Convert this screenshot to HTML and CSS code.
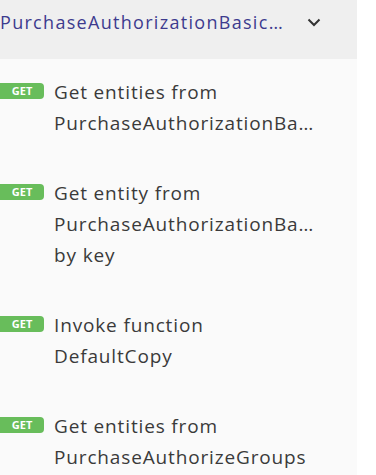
FILE: index.html
```html
<!DOCTYPE html>
<html lang="en">
<head>
    <meta charset="UTF-8">
    <meta name="viewport" content="width=device-width, initial-scale=1.0">
    <title>API Reference</title>
    <link rel="stylesheet" href="styles.css">
</head>
<body>
    <div class="sidebar">
        <div class="group-header">
            <span class="group-title">PurchaseAuthorizationBasicData</span>
            <svg class="chevron" width="14" height="9" viewBox="0 0 14 9">
                <path d="M1.5 1.5 L7 7 L12.5 1.5" fill="none" stroke="#333" stroke-width="2"/>
            </svg>
        </div>

        <ul class="endpoint-list">
            <li class="endpoint">
                <span class="method">GET</span>
                <div class="endpoint-text">
                    <span>Get entities from</span>
                    <span class="name">PurchaseAuthorizationBasicData</span>
                </div>
            </li>
            <li class="endpoint">
                <span class="method">GET</span>
                <div class="endpoint-text">
                    <span>Get entity from</span>
                    <span class="name">PurchaseAuthorizationBasicData</span>
                    <span>by key</span>
                </div>
            </li>
            <li class="endpoint">
                <span class="method">GET</span>
                <div class="endpoint-text">
                    <span>Invoke function</span>
                    <span class="name">DefaultCopy</span>
                </div>
            </li>
            <li class="endpoint">
                <span class="method">GET</span>
                <div class="endpoint-text">
                    <span>Get entities from</span>
                    <span class="name">PurchaseAuthorizeGroups</span>
                </div>
            </li>
        </ul>
    </div>
</body>
</html>
```

FILE: styles.css
```css
* {
    margin: 0;
    padding: 0;
    box-sizing: border-box;
}

body {
    font-family: "Open Sans", "DejaVu Sans", sans-serif;
    background: #fff;
    color: #3a3a3a;
    overflow: hidden;
}

.sidebar {
    width: 357px;
    min-height: 100vh;
    background: #fafafa;
}

.group-header {
    height: 59px;
    padding-top: 10px;
    background: #efefef;
    display: flex;
    align-items: flex-start;
}

.group-title {
    flex: none;
    width: 290px;
    font-size: 18px;
    line-height: 24px;
    letter-spacing: 1.3px;
    color: #3d3b8e;
    white-space: nowrap;
    overflow: hidden;
    text-overflow: ellipsis;
}

.chevron {
    margin-left: 17px;
    margin-top: 8px;
}

.endpoint-list {
    list-style: none;
    padding-top: 18px;
}

.endpoint {
    display: flex;
    align-items: flex-start;
    gap: 10px;
    padding-right: 37px;
    margin-bottom: 39px;
}

.method {
    flex: none;
    width: 44px;
    height: 16px;
    margin-top: 6px;
    background: #68bd5b;
    color: #fff;
    border-radius: 0 4px 4px 0;
    font-size: 11px;
    font-weight: 700;
    line-height: 16px;
    text-align: center;
}

.endpoint-text {
    flex: 1;
    min-width: 0;
    font-size: 19px;
    line-height: 31px;
    letter-spacing: 0.85px;
}

.endpoint-text span {
    display: block;
    white-space: nowrap;
    overflow: hidden;
    text-overflow: ellipsis;
}
```
